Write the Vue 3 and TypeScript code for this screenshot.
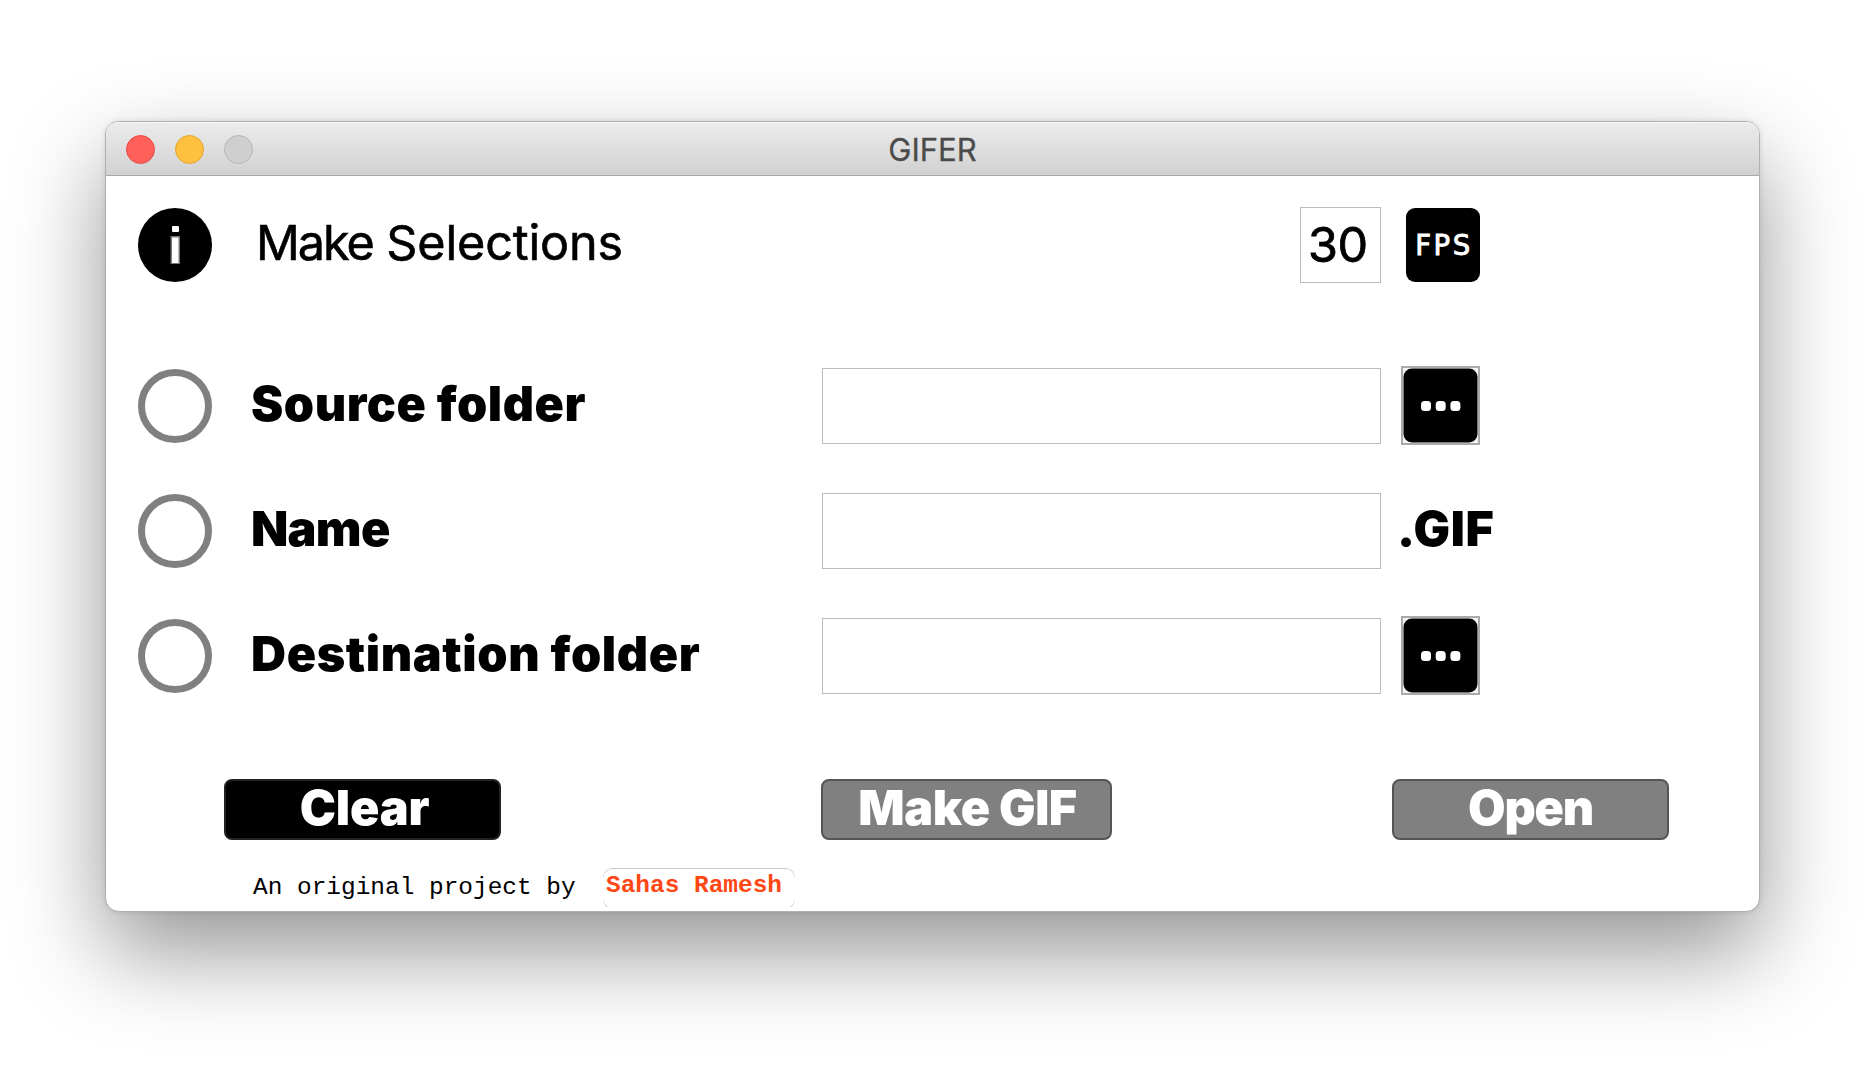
<script setup lang="ts">
import { ref } from 'vue'

interface Row {
  key: string
  label: string
  spacing: string
  browse: boolean
}

const rows: Row[] = [
  { key: 'source', label: 'Source folder', spacing: '0.54px', browse: true },
  { key: 'name', label: 'Name', spacing: '-0.7px', browse: false },
  { key: 'dest', label: 'Destination folder', spacing: '0.6px', browse: true },
]

const fps = ref('30')
const values = ref<Record<string, string>>({ source: '', name: '', dest: '' })
</script>

<template>
  <div class="desktop">
    <main class="window">
      <header class="titlebar">
        <div class="lights">
          <span class="light red"></span>
          <span class="light yellow"></span>
          <span class="light grey"></span>
        </div>
        <h1>GIFER</h1>
      </header>

      <section class="body">
        <div class="row top">
          <svg class="info" viewBox="0 0 74 74">
            <circle cx="37" cy="37" r="37" fill="#000" />
            <rect x="34" y="18" width="7" height="6" rx="1" fill="#fff" />
            <rect x="32.500" y="28" width="9.500" height="28" fill="#777" />
            <rect x="34" y="29.500" width="6.500" height="25.500" fill="#fff" />
          </svg>
          <span class="status"><span class="verb">Make</span> Selections</span>
          <input v-model="fps" class="field fps-field" aria-label="Frames per second" />
          <span class="fps">FPS</span>
        </div>

        <div v-for="row in rows" :key="row.key" class="row">
          <span class="ring"></span>
          <label :for="row.key" :style="{ letterSpacing: row.spacing }">{{ row.label }}</label>
          <input :id="row.key" v-model="values[row.key]" class="field" />
          <button v-if="row.browse" class="browse" type="button" aria-label="Browse">
            <svg viewBox="0 0 75 75">
              <rect x="0.500" y="0.500" width="74" height="74" rx="8.500" fill="#000" />
              <rect x="18" y="33" width="10" height="10" rx="3.500" fill="#fff" />
              <rect x="32.700" y="33" width="10" height="10" rx="3.500" fill="#fff" />
              <rect x="47.400" y="33" width="10" height="10" rx="3.500" fill="#fff" />
            </svg>
          </button>
          <span v-else class="ext">.GIF</span>
        </div>

        <div class="actions">
          <button class="action clear" type="button"><span>Clear</span></button>
          <button class="action make" type="button"><span>Make GIF</span></button>
          <button class="action open" type="button"><span>Open</span></button>
        </div>

        <footer>
          <span class="credit">An original project by</span>
          <span class="author">Sahas Ramesh</span>
        </footer>
      </section>
    </main>
  </div>
</template>

<style>
body {
  background: #fff;
}
</style>

<style scoped>
* {
  box-sizing: border-box;
}

.desktop {
  height: 1065px;
  overflow: hidden;
  padding: 121px 104px 0 105px;
  background: #fff;
  font-family: Inter, "Liberation Sans", sans-serif;
}

.window {
  height: 791px;
  border: 1px solid #b0b0b0;
  border-radius: 14px;
  background: #fff;
  box-shadow: 0 40px 92px rgba(0, 0, 0, 0.42), 0 0 5px rgba(0, 0, 0, 0.12);
}

.titlebar {
  display: grid;
  grid-template-columns: 1fr auto 1fr;
  align-items: center;
  height: 54px;
  padding-top: 1px;
  border-bottom: 1px solid #a9a9a9;
  border-radius: 13px 13px 0 0;
  background: linear-gradient(#ececec, #d1d1d1);
  box-shadow: inset 0 1px #f5f5f5;
}

.lights {
  display: flex;
  gap: 20px;
  padding-left: 20px;
}

.light {
  width: 29px;
  height: 29px;
  border: 1px solid;
  border-radius: 50%;
}

.red { background: #ff6059; border-color: #e74c47; }
.yellow { background: #ffbf3f; border-color: #e2a434; }
.grey { background: #cfcfcf; border-color: #b5b5b5; }

h1 {
  margin: 0;
  padding-top: 2px;
  color: #4b4b4b;
  font-size: 31px;
  font-weight: 400;
  line-height: 38px;
  -webkit-text-stroke: 0.3px #4b4b4b;
}

.body {
  padding: 29px 0 0 32px;
}

.row {
  display: flex;
  align-items: center;
  height: 79px;
  margin-bottom: 46px;
}

.row.top {
  margin-bottom: 82px;
}

.info,
.ring {
  flex: none;
  width: 74px;
  height: 74px;
}

.ring {
  border: 7px solid #808080;
  border-radius: 50%;
}

label,
.status {
  flex: none;
  padding-left: 39px;
  padding-bottom: 4px;
  color: #000;
  font-size: 48.5px;
  line-height: 60px;
  white-space: nowrap;
}

label {
  width: 610px;
  font-weight: 900;
}

.status {
  width: 1088px;
  padding-left: 44px;
  letter-spacing: -0.15px;
  -webkit-text-stroke: 0.6px #000;
}

.verb {
  letter-spacing: -2px;
}

.field {
  flex: none;
  width: 559px;
  height: 76px;
  padding: 0 7px;
  border: 1px solid #bcbcbc;
  border-radius: 0;
  outline: none;
  background: #fff;
  color: #000;
  font: 400 48.5px Inter, sans-serif;
}

.fps-field {
  width: 81px;
  letter-spacing: -0.5px;
  -webkit-text-stroke: 0.8px #000;
}

.fps {
  width: 74px;
  height: 74px;
  margin-left: 25px;
  border-radius: 9px;
  background: #000;
  color: #fff;
  font: 400 27.5px/74px "DejaVu Sans", sans-serif;
  letter-spacing: 2.6px;
  text-align: center;
  text-indent: 2px;
  -webkit-text-stroke: 0.9px #fff;
}

.browse {
  width: 79px;
  height: 79px;
  margin-left: 20px;
  padding: 0;
  border: 2px solid #aaa;
  background: #f4f4f4;
}

.browse svg {
  display: block;
  width: 75px;
  height: 75px;
}

.ext {
  margin-left: 16px;
  padding-bottom: 4px;
  font-size: 48.5px;
  font-weight: 900;
  line-height: 60px;
  letter-spacing: 0.6px;
}

.actions {
  display: flex;
  align-items: flex-start;
  margin: 84px 0 0 86px;
}

.action {
  height: 61px;
  padding: 0;
  border: 2px solid #555;
  border-radius: 8px;
  background: #808080;
  color: #fff;
  font: 900 48.5px/54px Inter, sans-serif;
}

.action span {
  display: block;
  height: 57px;
}

.clear {
  width: 277px;
  padding-left: 4px;
  border-color: #222;
  background: #000;
  letter-spacing: -0.2px;
}

.make {
  width: 291px;
  margin-left: 320px;
  padding-left: 2px;
  letter-spacing: -0.4px;
}

.open {
  width: 277px;
  margin-left: 280px;
  letter-spacing: -1.2px;
}

footer {
  display: flex;
  align-items: flex-start;
  margin: 28px 0 0 115px;
  font: 400 24.45px/28px "Courier New", "Liberation Mono", monospace;
  white-space: pre;
}

.credit {
  width: 350px;
  padding-top: 6px;
  color: #000;
}

.author {
  position: relative;
  width: 192px;
  height: 41px;
  padding: 4px 0 0 3px;
  color: #ff4713;
  font-weight: 700;
}

.author::before {
  content: "";
  position: absolute;
  inset: 0;
  border: 1.5px solid #c9c9c9;
  border-radius: 9px;
  mask-image: linear-gradient(#000 6px, transparent 10px, transparent 31px, #000 36px, #000 39px, transparent 39px);
}
</style>
